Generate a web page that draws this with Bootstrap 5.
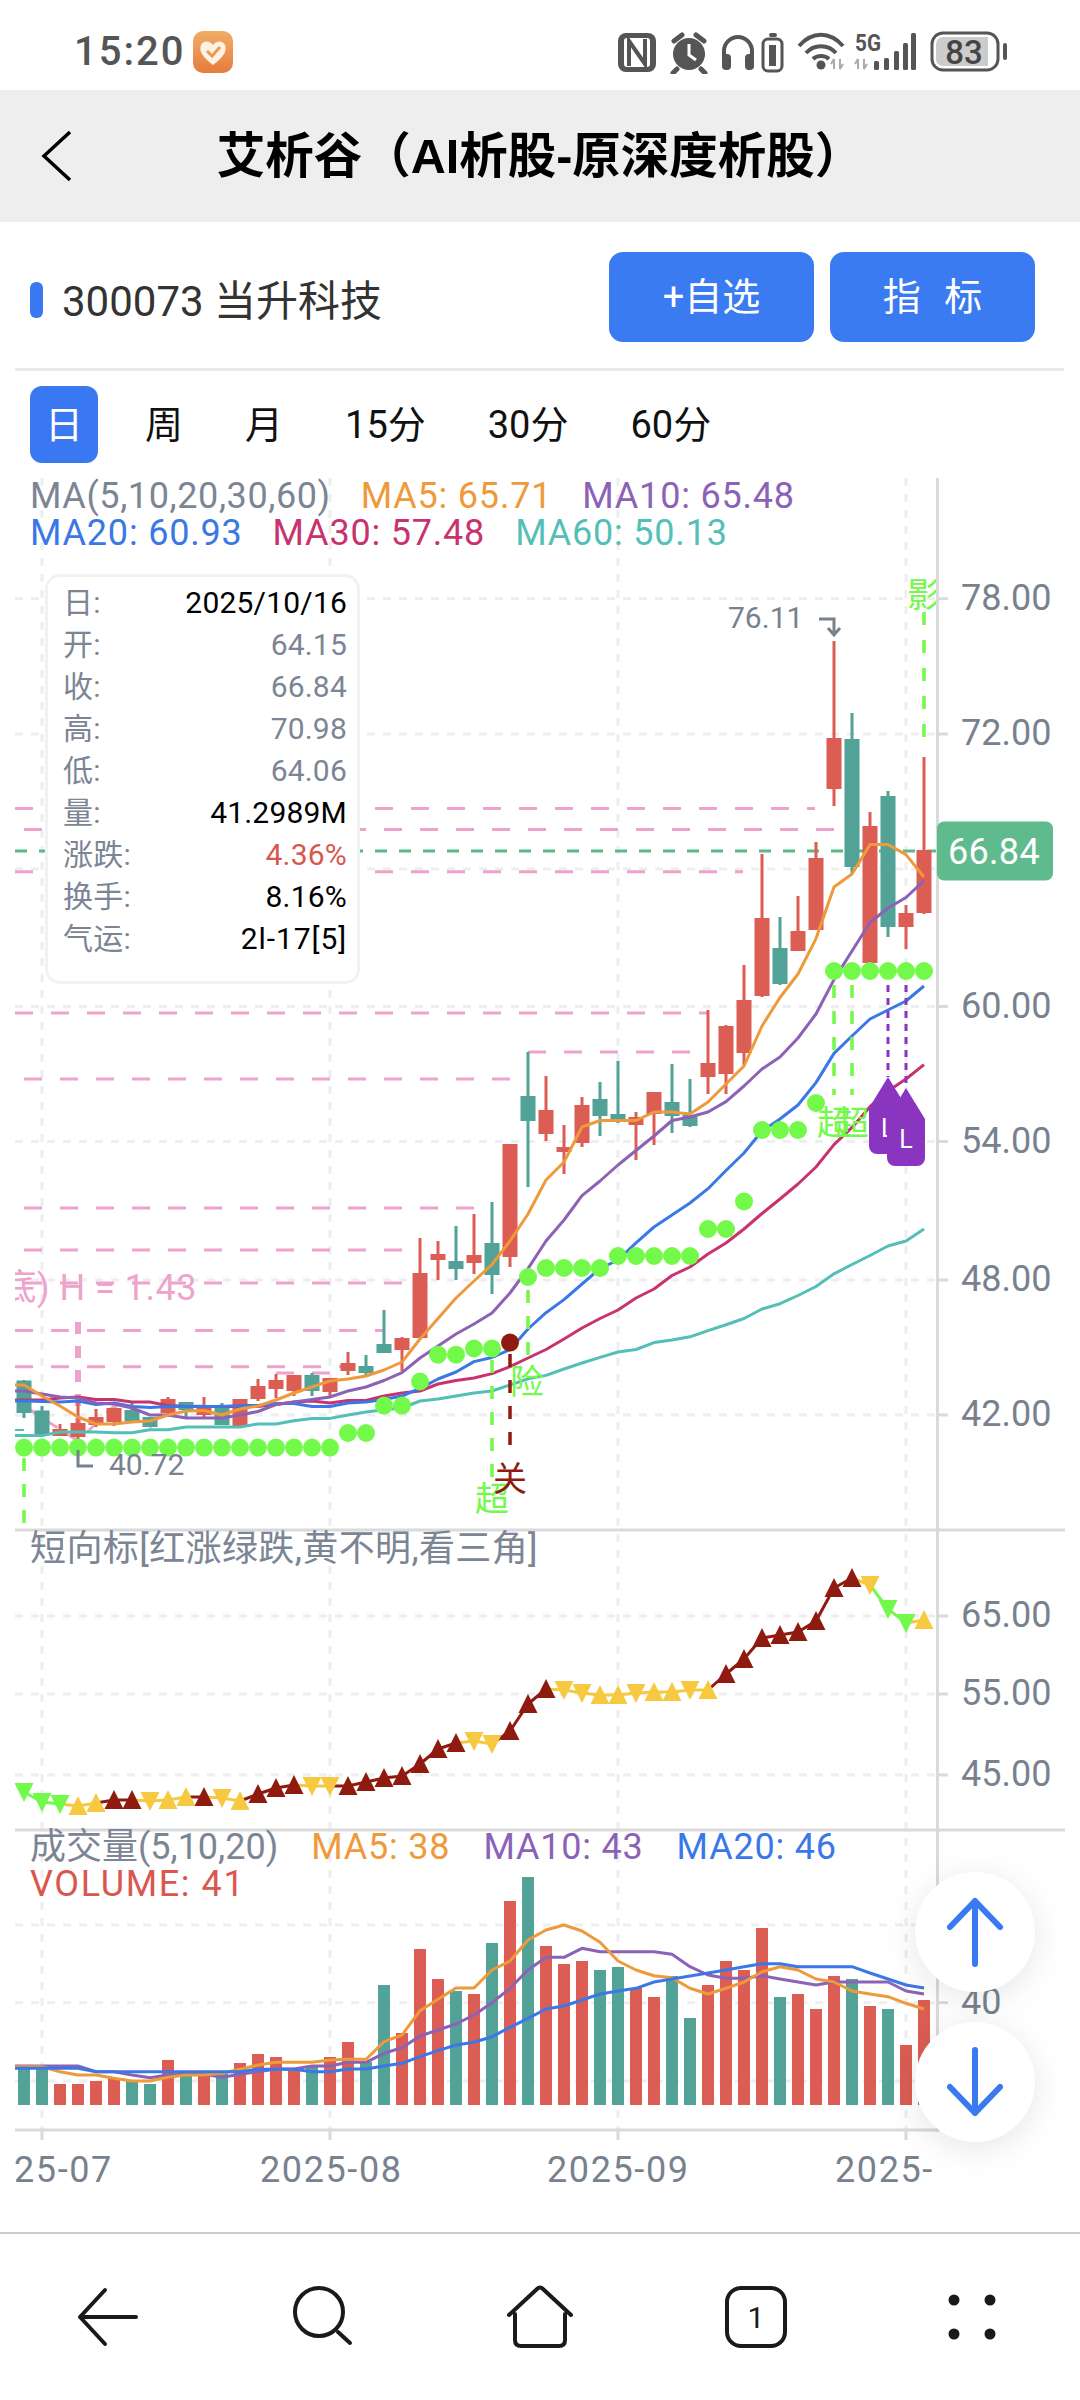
<!DOCTYPE html>
<html lang="zh-CN">
<head>
<meta charset="UTF-8">
<title>艾析谷</title>
<link rel="stylesheet" href="https://cdn.jsdelivr.net/npm/bootstrap@5.3.0/dist/css/bootstrap.min.css">
<style>
body { margin: 0; width: 1080px; height: 2400px; overflow: hidden; background: #fff; font-family: Roboto, "Noto Sans CJK SC", sans-serif; }
.status-row { height: 90px; padding: 13px 71px 0 74px; }
.clock { font-size: 40px; font-weight: 500; letter-spacing: 2px; color: #555; line-height: 1; }
.title-row { height: 132px; background: #eee; padding: 0; }
.side-slot { width: 110px; padding-left: 41px; }
.page-title { font-family: "Liberation Sans", "Noto Sans CJK SC", sans-serif; font-size: 48.5px; font-weight: 700; color: #000; line-height: 1; margin: 0; }
.stock-row { height: 146px; padding: 30px 45px 0 30px; }
.stock-mark { width: 13px; height: 36px; border-radius: 6px; background: #3a78f2; margin: 6px 19px 0 0; }
.stock-name { font-size: 42px; color: #333; line-height: 1; height: 90px; padding-top: 10px; display: flex; align-items: center; }
.act-btn { width: 205px; height: 90px; border-radius: 14px; background: #3a7bf2; border: 0; color: #fff; font-size: 38px; line-height: 1; padding: 0; }
.wide-txt { word-spacing: 14px; }
.rule-line { height: 3px; margin: 0 16px 0 15px; background: #e9e9e9; border: 0; opacity: 1; }
.period-row { height: 99px; padding: 15px 0 0 30px; gap: 32px; }
.period-row .nav-link { height: 77px; padding: 0 15px; border-radius: 12px; font-size: 38px; line-height: 78px; color: #111; }
.period-row .nav-link.active { background: #3a78f2; color: #fff; }
.chart-wrap { height: 1762px; }
.chart-svg { display: block; }
.legend-box { left: 30px; font-size: 36px; line-height: 37px; letter-spacing: .8px; white-space: nowrap; }
.legend-price { top: 8px; }
.legend-short { top: 1061px; letter-spacing: .4px; }
.legend-vol { top: 1359px; }
.legend-box .d-flex { gap: 30px; }
.legend-vol .d-flex { gap: 33px; }
.legend-head { letter-spacing: .6px; }
.legend-tight { letter-spacing: 0; }
.legend-wide { letter-spacing: 1.6px; }
.tone-grey { color: #7b8594; }
.tone-orange { color: #ee9a3a; }
.tone-purple { color: #8b62b5; }
.tone-blue { color: #3b78e7; }
.tone-crimson { color: #c8336f; }
.tone-teal { color: #54bfb7; }
.tone-red { color: #d9574f; }
.tip-card { left: 45px; top: 104px; width: 315px; height: 410px; border: 3px solid #f2f2f4; border-radius: 15px; padding: 5px 10px 0 15px; background: #fff; }
.tip-row { height: 42px; font-size: 30px; line-height: 42px; color: #000; letter-spacing: .2px; }
.tip-row > span:first-child { color: #7b8594; }
.tip-grey { color: #7b8594; }
.tip-red { color: #d9574f; }
.tip-luck { letter-spacing: .9px; }
.fab-btn { left: 915px; width: 120px; height: 120px; padding: 0; background: #fff; border: 0; box-shadow: 0 6px 34px rgba(0,0,0,.10); }
.fab-up { top: 1402px; }
.fab-down { top: 1552px; }
.foot-nav { height: 168px; border-top: 2px solid #ccc; }
.foot-cell { height: 166px; }
.ax-txt { font-family: Roboto, sans-serif; font-size: 36px; fill: #78828f; }
.date-txt { letter-spacing: 1.6px; }
.hl-txt { font-family: Roboto, sans-serif; font-size: 30px; fill: #78828f; }
.mark-txt { font-family: "Noto Sans CJK SC", sans-serif; font-size: 34px; }
.pin-txt { font-family: Roboto, sans-serif; font-size: 25px; fill: #fff; }
.price-txt { font-family: Roboto, sans-serif; font-size: 36px; fill: #fff; letter-spacing: .3px; }
.pink-txt { font-family: Roboto, "Noto Sans CJK SC", sans-serif; font-size: 36px; fill: #eda3cc; letter-spacing: .5px; }
.sys-txt { font-family: Roboto, sans-serif; font-weight: 700; fill: #555; }
.batt-txt { font-family: Roboto, sans-serif; font-weight: 500; font-size: 33px; fill: #444; }
.tab-num { font-family: Roboto, sans-serif; font-size: 30px; fill: #1a1a1a; }
</style>
</head>
<body>

<div class="status-row d-flex align-items-center justify-content-between">
    <div class="d-flex align-items-center gap-2">
        <span class="clock">15:20</span>
        <svg width="40" height="42" viewBox="0 0 40 42">
            <defs><linearGradient id="appTone" x1="0" y1="0" x2="0" y2="1"><stop offset="0" stop-color="#f0ad68"/><stop offset="1" stop-color="#e67c3e"/></linearGradient></defs>
            <rect width="40" height="42" rx="10" fill="url(#appTone)"/>
            <path d="M20 34 C8 25 6 19 8 14 C11 9 17 10 20 14 C23 10 29 9 32 14 C34 19 32 25 20 34 Z" fill="#fdf1e4"/>
            <path d="M14 20 L19 25 L27 16" fill="none" stroke="#eb9a55" stroke-width="3"/>
        </svg>
    </div>
    <svg width="392" height="44" viewBox="619 29 392 44">
        <rect x="620" y="32" width="38" height="39" rx="8" fill="#555"/>
        <rect x="626" y="37" width="26" height="29" rx="3" fill="#fff"/>
        <path d="M631 65 V40 L647 63 V38" fill="none" stroke="#555" stroke-width="4"/>
        <path d="M676 40 L684 34 M706 40 L698 34 M679 68 L675 72 M703 68 L707 72" stroke="#555" stroke-width="5" stroke-linecap="round"/>
        <circle cx="691" cy="53" r="16" fill="#555"/>
        <path d="M691 43 V54 L698 59" fill="none" stroke="#fff" stroke-width="3"/>
        <path d="M726 62 V50 a14 14 0 0 1 28 0 V62" fill="none" stroke="#555" stroke-width="4"/>
        <rect x="724" y="53" width="9" height="16" rx="4" fill="#555"/>
        <rect x="747" y="53" width="9" height="16" rx="4" fill="#555"/>
        <rect x="765" y="38" width="19" height="32" rx="5" fill="none" stroke="#555" stroke-width="3"/>
        <rect x="771" y="32" width="8" height="4" rx="2" fill="#555"/>
        <rect x="771" y="44" width="7" height="21" fill="#555"/>
        <path d="M801 45 C814 30 832 30 845 45 M808 52 C816 43 830 43 838 52 M815 58 C819 54 827 54 831 58" fill="none" stroke="#555" stroke-width="4"/>
        <circle cx="823" cy="64" r="4.5" fill="#555"/>
        <path d="M836 58 V68 M842 58 V68 M833 63 L836 58 M845 63 L842 68" stroke="#aaa" stroke-width="2" fill="none"/>
        <text class="sys-txt" x="857" y="50" font-size="24" textLength="26" lengthAdjust="spacingAndGlyphs">5G</text>
        <path d="M860 58 V68 M866 58 V68 M857 63 L860 58 M869 63 L866 68" stroke="#aaa" stroke-width="2" fill="none"/>
        <rect x="876" y="60" width="5" height="9" rx="1.5" fill="#555"/>
        <rect x="886" y="57" width="5" height="12" rx="1.5" fill="#555"/>
        <rect x="896" y="50" width="5" height="19" rx="1.5" fill="#555"/>
        <rect x="905" y="42" width="5" height="27" rx="1.5" fill="#555"/>
        <rect x="913" y="32" width="5" height="37" rx="1.5" fill="#555"/>
        <rect x="934" y="32" width="66" height="37" rx="11" fill="#fff" stroke="#555" stroke-width="3"/>
        <path d="M945 36 H990 V65 H945 a7 7 0 0 1 -7 -7 V43 a7 7 0 0 1 7 -7 Z" fill="#ccc"/>
        <text class="batt-txt" x="966" y="62.5" text-anchor="middle">83</text>
        <rect x="1005" y="42" width="4" height="17" rx="2" fill="#555"/>
    </svg>
</div>

<nav class="navbar title-row flex-nowrap">
    <div class="side-slot">
        <svg width="32" height="54" viewBox="0 0 32 54"><path d="M29 3 L3 27 L29 51" fill="none" stroke="#000" stroke-width="3.5"/></svg>
    </div>
    <h1 class="page-title flex-fill text-center">艾析谷（AI析股-原深度析股）</h1>
    <div class="side-slot"></div>
</nav>

<div class="stock-row d-flex justify-content-between align-items-start">
    <div class="d-flex align-items-center">
        <span class="stock-mark"></span>
        <span class="stock-name">300073 当升科技</span>
    </div>
    <div class="d-flex gap-3">
        <button type="button" class="btn act-btn">+自选</button>
        <button type="button" class="btn act-btn"><span class="wide-txt">指 标</span></button>
    </div>
</div>
<hr class="rule-line">

<ul class="nav nav-pills period-row">
    <li class="nav-item"><a class="nav-link active" href="#">日</a></li>
    <li class="nav-item"><a class="nav-link" href="#">周</a></li>
    <li class="nav-item"><a class="nav-link" href="#">月</a></li>
    <li class="nav-item"><a class="nav-link" href="#">15分</a></li>
    <li class="nav-item"><a class="nav-link" href="#">30分</a></li>
    <li class="nav-item"><a class="nav-link" href="#">60分</a></li>
</ul>

<div class="chart-wrap position-relative">
    <svg id="chart" class="chart-svg" width="1080" height="1762" viewBox="0 470 1080 1762"></svg>

    <div class="legend-box legend-price position-absolute">
        <div class="d-flex"><span class="tone-grey legend-head">MA(5,10,20,30,60)</span><span class="tone-orange">MA5: 65.71</span><span class="tone-purple">MA10: 65.48</span></div>
        <div class="d-flex"><span class="tone-blue">MA20: 60.93</span><span class="tone-crimson">MA30: 57.48</span><span class="tone-teal">MA60: 50.13</span></div>
    </div>
    <div class="legend-box legend-short position-absolute tone-grey">短向标[红涨绿跌,黄不明,看三角]</div>
    <div class="legend-box legend-vol position-absolute">
        <div class="d-flex"><span class="tone-grey legend-tight">成交量(5,10,20)</span><span class="tone-orange">MA5: 38</span><span class="tone-purple">MA10: 43</span><span class="tone-blue">MA20: 46</span></div>
        <div class="tone-red legend-wide">VOLUME: 41</div>
    </div>

    <div class="card tip-card position-absolute">
        <div class="tip-row d-flex justify-content-between"><span>日:</span><span>2025/10/16</span></div>
        <div class="tip-row d-flex justify-content-between"><span>开:</span><span class="tip-grey">64.15</span></div>
        <div class="tip-row d-flex justify-content-between"><span>收:</span><span class="tip-grey">66.84</span></div>
        <div class="tip-row d-flex justify-content-between"><span>高:</span><span class="tip-grey">70.98</span></div>
        <div class="tip-row d-flex justify-content-between"><span>低:</span><span class="tip-grey">64.06</span></div>
        <div class="tip-row d-flex justify-content-between"><span>量:</span><span>41.2989M</span></div>
        <div class="tip-row d-flex justify-content-between"><span>涨跌:</span><span class="tip-red">4.36%</span></div>
        <div class="tip-row d-flex justify-content-between"><span>换手:</span><span>8.16%</span></div>
        <div class="tip-row d-flex justify-content-between"><span>气运:</span><span class="tip-luck">2l-17[5]</span></div>
    </div>

    <button type="button" class="btn fab-btn fab-up rounded-circle position-absolute">
        <svg width="62" height="72" viewBox="0 0 62 72"><path d="M31 68 V5 M6 31 L31 5 L56 31" fill="none" stroke="#3a7af0" stroke-width="6" stroke-linecap="round" stroke-linejoin="round"/></svg>
    </button>
    <button type="button" class="btn fab-btn fab-down rounded-circle position-absolute">
        <svg width="62" height="72" viewBox="0 0 62 72"><path d="M31 4 V67 M6 41 L31 67 L56 41" fill="none" stroke="#3a7af0" stroke-width="6" stroke-linecap="round" stroke-linejoin="round"/></svg>
    </button>
</div>

<div class="foot-nav row g-0">
    <div class="col foot-cell d-flex align-items-center justify-content-center">
        <svg width="62" height="60" viewBox="0 0 62 60"><path d="M59 30 H3 M28 3 L3 30 L28 57" fill="none" stroke="#1a1a1a" stroke-width="4" stroke-linecap="round" stroke-linejoin="round"/></svg>
    </div>
    <div class="col foot-cell d-flex align-items-center justify-content-center">
        <svg width="66" height="66" viewBox="0 0 66 66"><circle cx="28" cy="28" r="24" fill="none" stroke="#1a1a1a" stroke-width="4"/><path d="M47 48 L59 59" stroke="#1a1a1a" stroke-width="4" stroke-linecap="round"/></svg>
    </div>
    <div class="col foot-cell d-flex align-items-center justify-content-center">
        <svg width="70" height="66" viewBox="0 0 70 66"><path d="M4 31 L32 5 Q35 2 38 5 L66 31 M10 30 V56 Q10 62 16 62 H54 Q60 62 60 56 V30" fill="none" stroke="#1a1a1a" stroke-width="4" stroke-linecap="round"/></svg>
    </div>
    <div class="col foot-cell d-flex align-items-center justify-content-center">
        <svg width="64" height="64" viewBox="0 0 64 64"><rect x="3" y="3" width="58" height="58" rx="14" fill="none" stroke="#1a1a1a" stroke-width="4"/><text class="tab-num" x="32" y="43" text-anchor="middle">1</text></svg>
    </div>
    <div class="col foot-cell d-flex align-items-center justify-content-center">
        <svg width="48" height="46" viewBox="0 0 48 46"><circle cx="6" cy="6" r="5.5" fill="#1a1a1a"/><circle cx="42" cy="6" r="5.5" fill="#1a1a1a"/><circle cx="6" cy="40" r="5.5" fill="#1a1a1a"/><circle cx="42" cy="40" r="5.5" fill="#1a1a1a"/></svg>
    </div>
</div>

<script src="https://cdn.jsdelivr.net/npm/bootstrap@5.3.0/dist/js/bootstrap.bundle.min.js"></script>
<script>
const RED = '#db5d54', TEAL = '#52a297', LIME = '#72f94a', PINK = '#eda3cc', GRID = '#eeeeee', AXIS = '#dadada';
const PURPLE = '#8a35c0', DARK = '#8f1b10', YEL = '#f7c940', GREY = '#78828f';
const X = i => 24 + 18 * i;

// high, body top, body bottom, low, colour
const candles = [
[1380,1380.5,1413,1418,'t'],[1406,1410.5,1434.5,1435,'t'],[1424,1429,1436,1436,'r'],[1400,1423,1437,1444,'r'],
[1409,1417,1425,1427,'r'],[1408,1408,1422,1426,'r'],[1403,1410,1421,1421,'t'],[1417,1417,1427,1427,'t'],
[1397,1399,1413,1417,'r'],[1402,1402,1410,1417,'t'],[1397,1406,1415,1417,'r'],[1403,1408,1425,1425,'t'],
[1399,1399,1427,1427,'r'],[1379,1386,1399,1401,'r'],[1374,1380,1389,1398,'r'],[1375,1375,1391,1396,'r'],
[1373,1375,1391,1396,'t'],[1378,1378,1392,1396,'r'],[1352,1363,1371,1375,'r'],[1355,1366,1373,1377,'t'],
[1310,1344,1353,1353,'t'],[1337,1338,1350,1371,'r'],[1238,1273,1338,1338,'r'],[1241,1254,1260,1280,'r'],
[1226,1261,1269,1280,'t'],[1214,1255,1263,1274,'r'],[1202,1243,1275,1294,'t'],[1144,1144,1257,1267,'r'],
[1052,1096,1121,1187,'t'],[1076,1110,1134,1141,'r'],[1125,1147,1152,1174,'r'],[1097,1105,1143,1147,'r'],
[1082,1099,1116,1136,'t'],[1061,1114,1120,1123,'t'],[1112,1117,1125,1160,'r'],[1092,1092,1114,1145,'r'],
[1064,1102,1116,1133,'t'],[1079,1115,1126,1127,'t'],[1010,1063,1077,1094,'r'],[1025,1026,1074,1094,'r'],
[965,1000,1053,1065,'r'],[854,918,996,997,'r'],[917,948,984,985,'t'],[896,931,951,951,'r'],
[842,858,930,930,'r'],[641,738,789,806,'r'],[713,739,867,873,'t'],[812,826,963,963,'r'],
[791,796,927,937,'t'],[905,913,927,949,'r'],[757,850,913,914,'r']];

const ma5 = [1385,1396,1406,1417,1424,1424,1422,1421,1415,1411,1410.5,1415,1409,1406,1400,1393,1387,1381,1379,1376,1370,1362,1339,1318.5,1298,1281,1264.5,1241,1214,1180,1162,1127,1120.5,1120.5,1120.5,1112,1112,1114,1102,1084,1066,1026,997.5,974,938.6,887,874,844.6,844.6,854.6,877];
const ma10 = [1391,1394,1397,1398,1403,1404,1408,1415,1415,1418,1418,1418,1415,1411.5,1404.6,1402,1399.5,1397,1391,1387,1380.5,1372.6,1358,1346,1334,1324,1313,1293,1268.6,1241,1220,1195.6,1181,1165,1150.5,1136,1120.5,1117,1112,1101.6,1086,1069,1057,1038,1014,979.6,951,922.5,908,897.5,880.7];
const ma20 = [1401,1401.5,1402,1401,1404.6,1403,1406.5,1407.5,1406.5,1406.5,1406.5,1406.5,1405.6,1405.6,1403.6,1403.6,1406.5,1406.5,1403,1402,1399.5,1396,1388.4,1379,1372,1361.6,1357.5,1349.5,1329,1312.7,1299.6,1284,1268.6,1260,1242.8,1227,1215,1203,1188.7,1170.5,1153,1131,1119,1105,1082.6,1053.4,1036,1019,1010,1001,986];
const ma30 = [1400,1400,1398,1397,1399.5,1399.5,1402,1402,1405.6,1406.5,1406.5,1406.5,1406.5,1406.5,1404.6,1402,1401,1403,1400.5,1400.5,1396,1393,1391,1384,1380.5,1378,1373.6,1366.7,1358,1349.5,1339,1328,1318.5,1310,1298,1289,1275.5,1267,1254,1243,1229,1213.5,1199,1184,1167,1144.6,1127.4,1106.7,1091,1079,1064.7];
const ma60 = [1435.6,1435.6,1432,1432,1432,1432.8,1432.8,1429.7,1429.7,1427,1427,1427,1427,1424,1424,1420.8,1418.4,1418.4,1415,1412,1409.8,1408,1401,1399,1396,1393,1391,1385,1378.8,1375.4,1369,1363,1357.4,1352,1349.5,1342.6,1340,1336.8,1330.6,1324.7,1318.5,1309,1303.7,1295.5,1286.5,1273.8,1264.5,1255.5,1246,1241,1229];

// green dots under/over the candles, one per bar
const dots = [1447.6,1447.6,1447.6,1447.6,1447.6,1447.6,1447.6,1447.6,1447.6,1447.6,1447.6,1447.6,1447.6,1447.6,1447.6,1447.6,1447.6,1447.6,1433,1433,1405.6,1405.6,1381.5,1354.7,1354.7,1348.5,1348.5,1342.6,1277,1268,1268,1268,1268,1256,1256,1256,1256,1256,1229,1229,1201.4,1130,1130,1130,1103,971,971,971,971,971,971];

const shortVals = [1792,1802,1804,1806,1803,1800,1800,1801,1800,1797,1797,1798,1801,1794,1788,1785,1786,1786,1786,1782,1778,1776,1764,1749,1743,1741,1744,1731,1704,1689,1690,1693,1695,1695,1693,1692,1692,1690,1690,1674,1659,1638,1635,1632,1621,1588,1578,1585,1609,1623,1620];
const shortKinds = 'gggYYRRyYYRyYRRRyyRRRRRRRyyRRRyyYYyYYyYRRRRRRRRyggY';

const volTop = [2068,2068,2084,2084,2081,2078,2081,2084,2060,2075,2075,2072,2063,2054,2057,2068,2067,2057,2042,2062,1985,2033,1949,1979,1991,1994,1943,1901,1877,1946,1964,1961,1970,1967,1988,1997,1976,2018,1985,1961,1970,1928,1997,1994,2009,1976,1979,2006,2009,2045,2000];
const volKind = 'ttrrrrttrtrtrrrrtrrttrrrtrtrtrrrttrrttrrrrtrrrtrtrr';
const vma5 = [2066.7,2066.7,2071.7,2075,2075,2078.3,2081,2081,2077.3,2075,2075,2073.3,2069.3,2065,2062.3,2062.3,2062.3,2060,2059.3,2059.3,2041.7,2035,2010.7,1999.3,1988,1988,1970,1961,1940,1930,1925,1931,1942.3,1961,1970,1975.7,1977.7,1988.3,1994,1988.3,1982,1971.7,1966.7,1970,1979,1982,1991,1994,1996.7,2003.3,2009];
const vma10 = [2066,2066,2066,2066,2071.7,2071.7,2075,2077.7,2075,2074.3,2074.3,2077.3,2074.3,2071.7,2069,2069,2066,2066,2062.3,2062.3,2053.3,2047.7,2036,2030,2024,2015,2002.7,1988.3,1970,1957.3,1957.3,1948.3,1951.7,1951.7,1951.7,1951.7,1954.3,1966.7,1975,1978.3,1978.3,1975.7,1979,1982,1985,1982,1982,1982,1982,1991,1994];
const vma20 = [2068.3,2068.3,2068.3,2068.3,2071.7,2071.7,2071.7,2071.7,2071.7,2071.7,2071.7,2071.7,2071.7,2069.3,2069.3,2069.3,2071.7,2071.7,2069,2069,2066,2063.3,2056.7,2050.7,2045,2042.3,2036.7,2027.3,2018.3,2009,2006,2000,1994,1991,1988.3,1982,1979,1976,1973,1970,1966.7,1963.7,1963.7,1966.7,1966.7,1966.7,1966.7,1973,1979,1985,1988];

const pinkLines = [[808.6,15,815],[829.6,24,834],[871.8,15,743],[1013,15,708],[1052,528,690],[1079,24,510],[1208,24,474],[1250,24,402],[1283,24,402],[1330.6,15,384],[1366.7,15,348],[1373,276,330]];

let s = '<defs><clipPath id="plotClip"><rect x="15" y="470" width="921" height="1670"/></clipPath></defs>';

function line(pts, colour, w) {
    const p = pts.map((y, i) => X(i) + ',' + y).join(' ');
    return '<polyline points="15,' + pts[0] + ' ' + p + '" fill="none" stroke="' + colour + '" stroke-width="' + w + '" stroke-linejoin="round"/>';
}
function dashed(x1, y1, x2, y2, colour, w, dash) {
    return '<line x1="' + x1 + '" y1="' + y1 + '" x2="' + x2 + '" y2="' + y2 + '" stroke="' + colour + '" stroke-width="' + w + '" stroke-dasharray="' + dash + '"/>';
}

// grid
[598.7, 734, 869, 1006.5, 1141.5, 1280, 1415, 1616, 1694, 1775, 1925, 2002.7, 2081].forEach(y => { s += dashed(15, y, 936, y, GRID, 3, '8 8'); });
[42, 330, 618, 906].forEach(x => {
    s += dashed(x, 478, x, 2130, GRID, 3, '8 8');
    s += '<rect x="' + (x - 1.5) + '" y="2130" width="3" height="10" fill="' + AXIS + '"/>';
});
[598.7, 734, 1006.5, 1141.5, 1280, 1415, 1616, 1694, 1775, 2002.7].forEach(y => {
    s += '<rect x="936" y="' + (y - 1.5) + '" width="12" height="3" fill="' + AXIS + '"/>';
});

// pink levels
pinkLines.forEach(l => { s += dashed(l[1], l[0], l[2], l[0], PINK, 3, '18 18'); });
s += '<polyline points="24,1406 78,1441 114,1406 150,1427 168,1406 222,1406" fill="none" stroke="' + PINK + '" stroke-width="3" stroke-dasharray="14 12"/>';
s += dashed(78, 1322, 78, 1442, PINK, 6, '12 12');
s += '<rect x="15" y="1429" width="9" height="2" fill="#54bfb7"/>';
s += '<g clip-path="url(#plotClip)"><text class="pink-txt" x="197" y="1300" text-anchor="end">(顶底) H = 1.43</text></g>';

// last price line
s += dashed(15, 851, 936, 851, '#5cb88a', 3, '12 12');

// candles
candles.forEach((c, i) => {
    const col = c[4] === 'r' ? RED : TEAL;
    s += '<rect x="' + (X(i) - 1.5) + '" y="' + c[0] + '" width="3" height="' + (c[3] - c[0]) + '" fill="' + col + '"/>';
    s += '<rect x="' + (X(i) - 7.5) + '" y="' + c[1] + '" width="15" height="' + (c[2] - c[1]) + '" fill="' + col + '"/>';
});

// moving averages
s += line(ma60, '#54bfb7', 3) + line(ma30, '#c8336f', 3) + line(ma20, '#3b78e7', 3) + line(ma10, '#8b62b5', 3) + line(ma5, '#ee9a3a', 3);

// signal drops
s += dashed(24, 1458, 24, 1530, LIME, 3.5, '13 13');
s += dashed(492, 1360, 492, 1490, LIME, 3.5, '13 13');
s += dashed(528, 1290, 528, 1366, LIME, 3.5, '13 13');
s += dashed(834, 985, 834, 1095, LIME, 3.5, '13 13');
s += dashed(852, 985, 852, 1095, LIME, 3.5, '13 13');
s += dashed(924, 612, 924, 745, LIME, 3.5, '13 15');
s += dashed(510, 1354, 510, 1451, DARK, 3.5, '13 13');
s += dashed(888, 985, 888, 1077, PURPLE, 3, '7 6');
s += dashed(906, 985, 906, 1088, PURPLE, 3, '7 6');

dots.forEach((y, i) => { s += '<circle cx="' + X(i) + '" cy="' + y + '" r="9" fill="' + (i === 27 ? DARK : LIME) + '"/>'; });

// text marks on the plot
s += '<g clip-path="url(#plotClip)">';
s += '<text class="mark-txt" x="492" y="1511" text-anchor="middle" fill="' + LIME + '">超</text>';
s += '<text class="mark-txt" x="527" y="1394" text-anchor="middle" fill="' + LIME + '">险</text>';
s += '<text class="mark-txt" x="510" y="1491" text-anchor="middle" fill="' + DARK + '">关</text>';
s += '<text class="mark-txt" x="834" y="1135" text-anchor="middle" fill="' + LIME + '">超</text>';
s += '<text class="mark-txt" x="852" y="1135" text-anchor="middle" fill="' + LIME + '">超</text>';
s += '<text class="mark-txt" x="924" y="607" text-anchor="middle" fill="' + LIME + '">影</text>';
s += '</g>';

// purple L pins
s += '<path d="M888 1077 L907 1108 V1146 a8 8 0 0 1 -8 8 H877 a8 8 0 0 1 -8 -8 V1108 Z" fill="' + PURPLE + '"/>';
s += '<text class="pin-txt" x="881" y="1137">L</text>';
s += '<path d="M906 1088 L925 1119 V1158 a8 8 0 0 1 -8 8 H895 a8 8 0 0 1 -8 -8 V1119 Z" fill="' + PURPLE + '"/>';
s += '<text class="pin-txt" x="906" y="1148" text-anchor="middle">L</text>';

// high / low labels
s += '<text class="hl-txt" x="728" y="628">76.11</text>';
s += '<path d="M819 619 H834 V634 M828 628 L834 635 L840 628" fill="none" stroke="' + GREY + '" stroke-width="3"/>';
s += '<text class="hl-txt" x="109" y="1475">40.72</text>';
s += '<path d="M78 1450 V1466 H93" fill="none" stroke="' + GREY + '" stroke-width="3"/>';

// short direction pane
s += '<g clip-path="url(#plotClip)">';
shortVals.forEach((y, i) => {
    if (i === 0) return;
    const k = shortKinds[i];
    const col = k === 'g' ? LIME : (k === 'R' ? DARK : YEL);
    s += '<line x1="' + X(i - 1) + '" y1="' + shortVals[i - 1] + '" x2="' + X(i) + '" y2="' + y + '" stroke="' + col + '" stroke-width="3"/>';
});
shortVals.forEach((y, i) => {
    const k = shortKinds[i];
    const col = k === 'g' ? LIME : (k === 'R' ? DARK : YEL);
    const x = X(i);
    const pts = (k === 'R' || k === 'Y')
        ? x + ',' + (y - 10) + ' ' + (x - 9.5) + ',' + (y + 9) + ' ' + (x + 9.5) + ',' + (y + 9)
        : x + ',' + (y + 10) + ' ' + (x - 9.5) + ',' + (y - 9) + ' ' + (x + 9.5) + ',' + (y - 9);
    s += '<polygon points="' + pts + '" fill="' + col + '"/>';
});
s += '</g>';

// volume
volTop.forEach((y, i) => {
    s += '<rect x="' + (X(i) - 6) + '" y="' + y + '" width="12" height="' + (2105 - y) + '" fill="' + (volKind[i] === 'r' ? RED : TEAL) + '"/>';
});
s += line(vma10, '#8b62b5', 3) + line(vma5, '#ee9a3a', 3) + line(vma20, '#3b78e7', 3);

// pane rules and axis
s += '<rect x="15" y="1528.5" width="1050" height="3" fill="' + AXIS + '"/>';
s += '<rect x="15" y="1828.5" width="1050" height="3" fill="' + AXIS + '"/>';
s += '<rect x="15" y="2128.5" width="921" height="3" fill="' + AXIS + '"/>';
s += '<rect x="936" y="478" width="3" height="1654" fill="' + AXIS + '"/>';

// axis labels
[['78.00', 598.7], ['72.00', 734], ['60.00', 1006.5], ['54.00', 1141.5], ['48.00', 1280], ['42.00', 1415], ['65.00', 1616], ['55.00', 1694], ['45.00', 1775], ['40', 2002.7]].forEach(a => {
    s += '<text class="ax-txt" x="961" y="' + (a[1] + 11) + '">' + a[0] + '</text>';
});
s += '<rect x="937" y="821.5" width="116" height="59" rx="7" fill="#5fbb8e"/>';
s += '<text class="price-txt" x="948" y="864">66.84</text>';
[['25-07', 14], ['2025-08', 260], ['2025-09', 547], ['2025-', 835]].forEach(a => {
    s += '<text class="ax-txt date-txt" x="' + a[1] + '" y="2182">' + a[0] + '</text>';
});

document.getElementById('chart').innerHTML = s;
</script>
</body>
</html>
